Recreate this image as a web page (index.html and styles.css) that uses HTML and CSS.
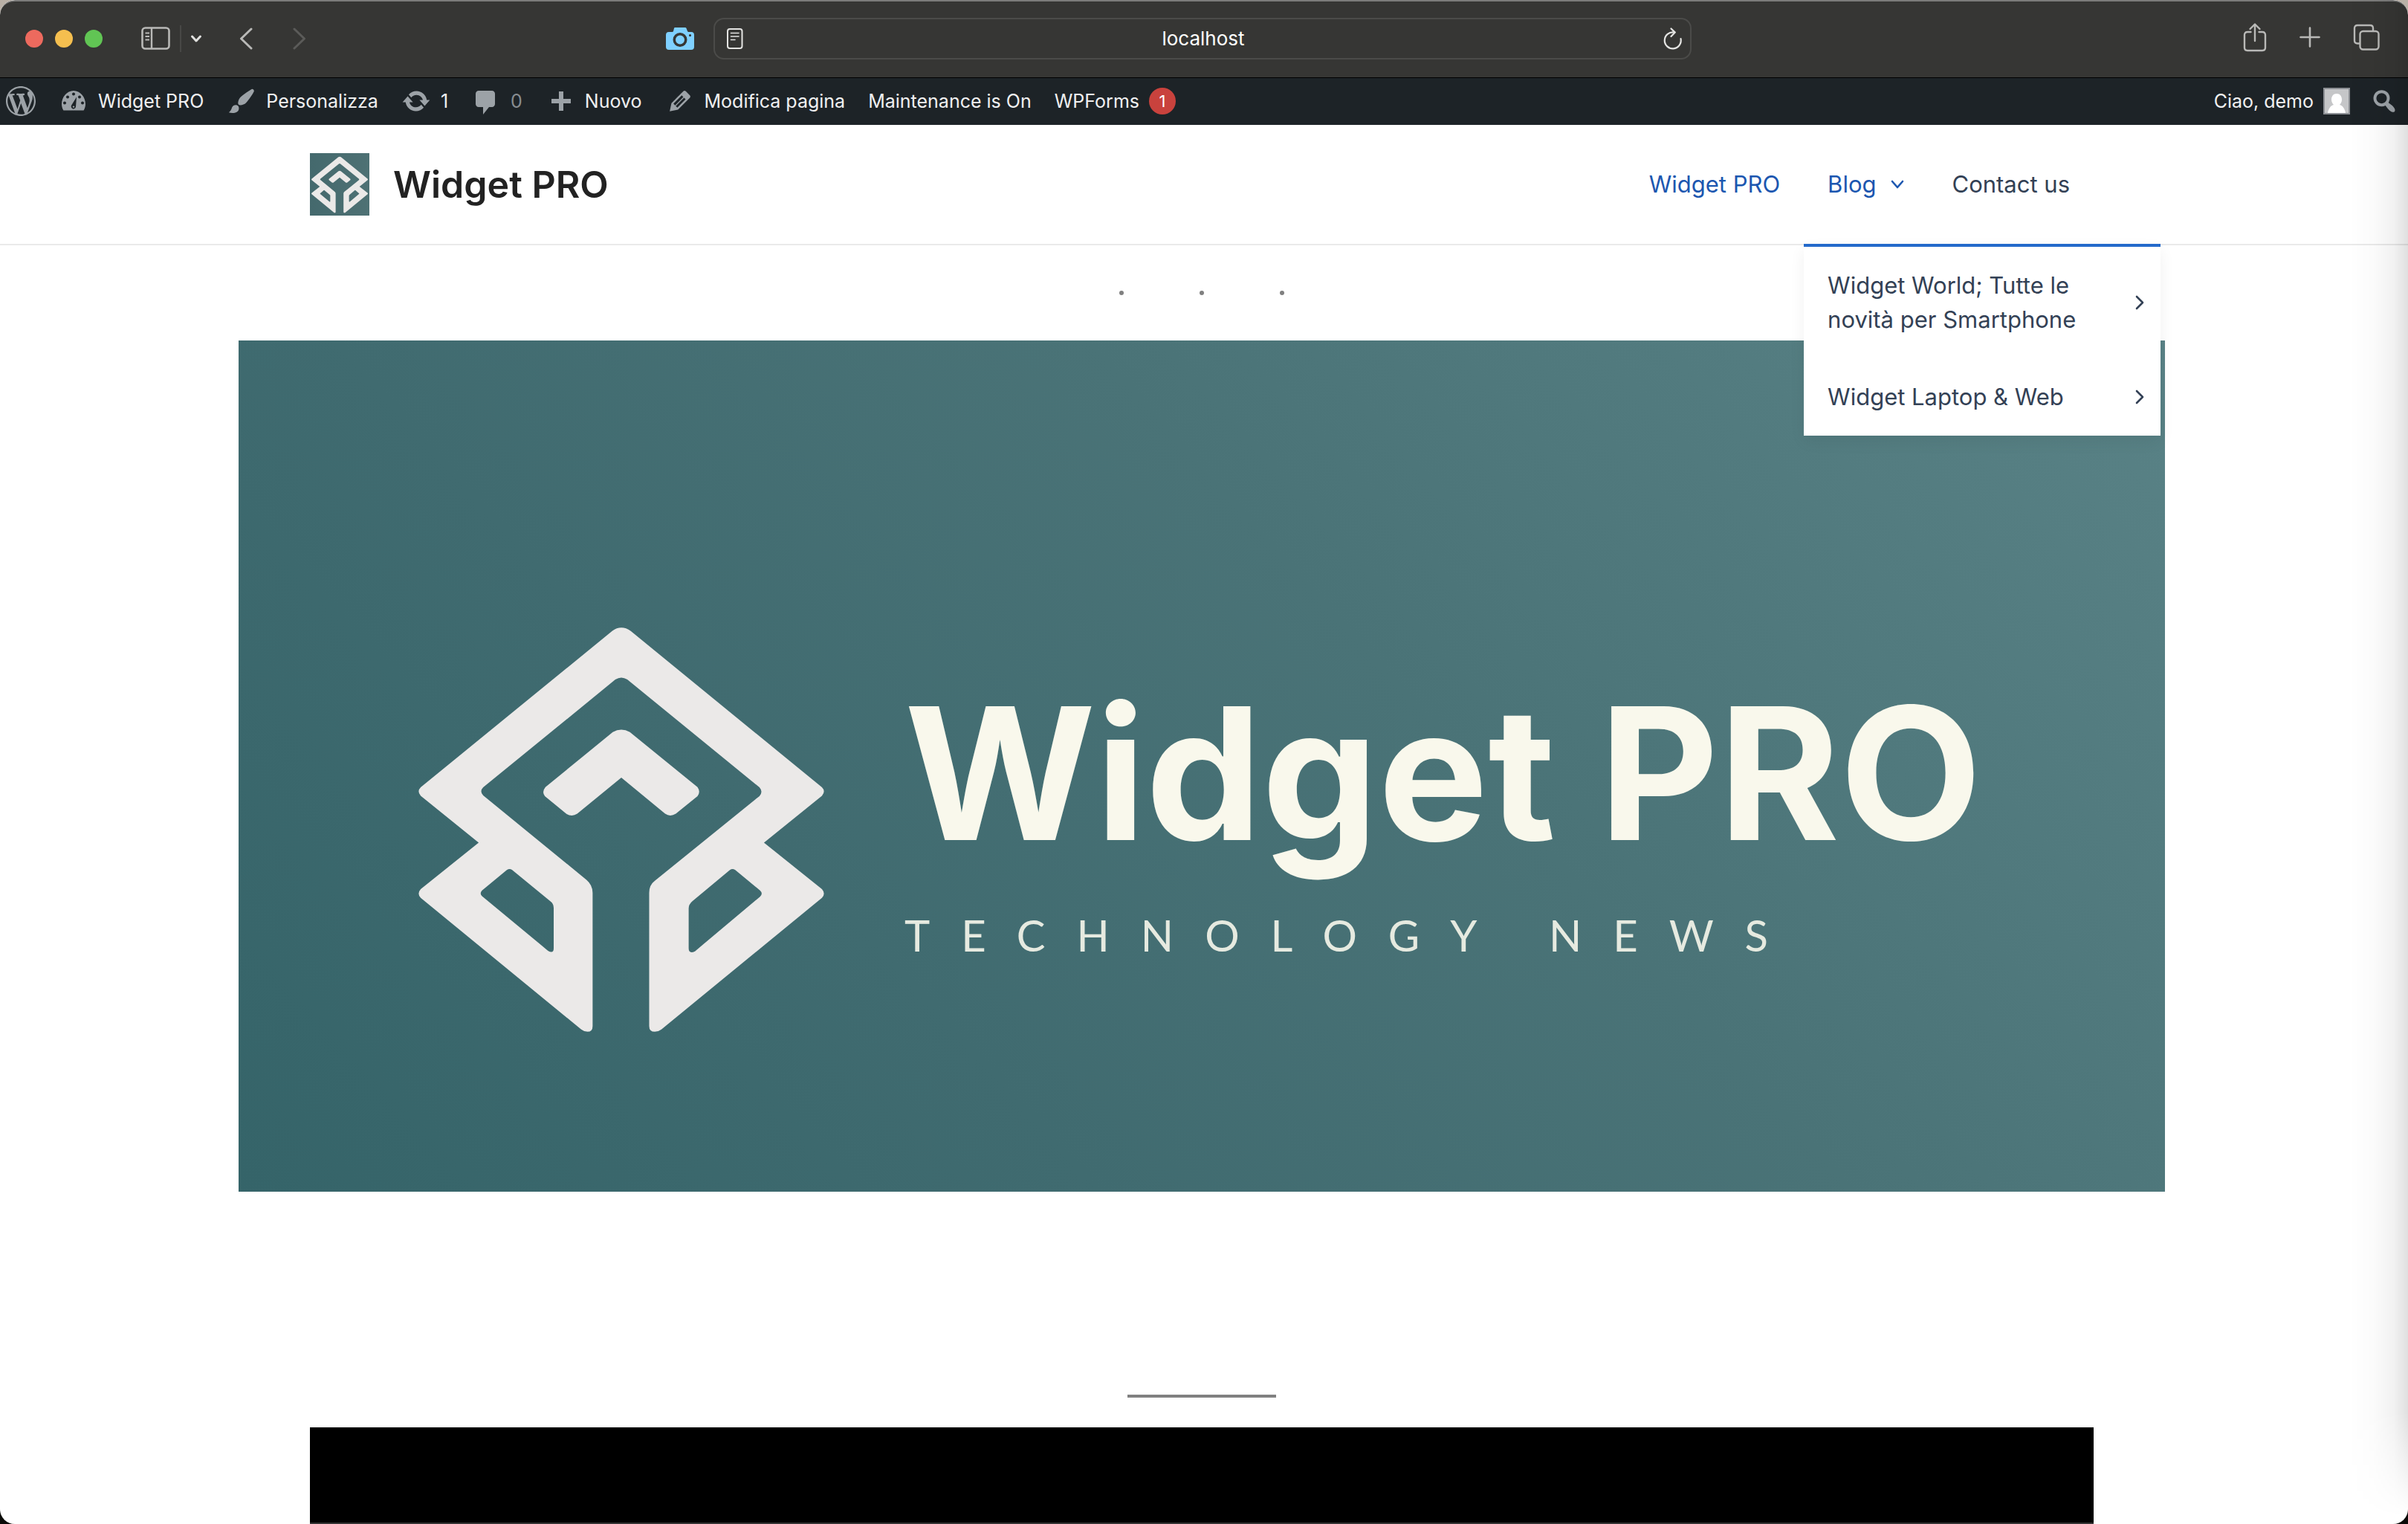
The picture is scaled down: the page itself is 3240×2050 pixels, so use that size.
FILE: index.html
```html
<!DOCTYPE html>
<html lang="it">
<head>
<meta charset="utf-8">
<title>Widget PRO</title>
<meta name="viewport" content="width=device-width, initial-scale=1">
<link rel="stylesheet" href="styles.css">
</head>
<body>
<svg class="defs" width="0" height="0" aria-hidden="true">
  <symbol id="mark" viewBox="60 62 1428 1422">
    <path fill-rule="evenodd" d="M742 74Q774 51 807 74L1480 624Q1494 638 1480 654L1276 819L1480 982Q1494 998 1480 1013L915 1476Q905 1484 892 1484Q872 1484 872 1464V995Q872 968 892 953L1260 655Q1274 640 1260 624L795 245Q774 231 753 245L288 624Q274 638 288 653L652 950Q673 968 673 995V1464Q673 1484 655 1484Q643 1484 633 1476L68 1013Q54 998 68 982L272 819L68 654Q54 638 68 624ZM371 915L284 987Q274 997 284 1007L516 1199Q536 1211 536 1190V1048Q536 1034 524 1025L390 915Q381 908 371 915ZM1156 915L1024 1025Q1011 1036 1011 1050V1190Q1011 1211 1033 1201L1262 1009Q1274 998 1262 987L1175 915Q1165 908 1156 915Z"/>
    <path d="M744 430Q774 413 804 430L1042 623Q1054 640 1042 655L966 717Q946 730 928 717L774 590L619 717Q600 730 580 717L505 655Q493 640 507 623Z"/>
  </symbol>
</svg>

<div class="window">
  <header class="toolbar">
    <div class="start-tools">
      <div class="lights">
        <button class="light close" aria-label="Chiudi"></button>
        <button class="light minimize" aria-label="Riduci"></button>
        <button class="light expand" aria-label="Ingrandisci"></button>
      </div>
      <div class="side-tools">
        <button class="tool" aria-label="Barra laterale"><svg width="40" height="32" viewBox="0 0 40 32" fill="none" stroke="currentColor"><rect x="1.5" y="1.5" width="36" height="28" rx="4" stroke-width="2.6"/><path d="M14 2v28" stroke-width="2.4"/><path d="M5.500 8.500h5.500M5.500 13h5.500M5.500 17.500h5.500" stroke-width="1.800"/></svg></button>
        <span class="divider"></span>
        <button class="tool" aria-label="Gruppi di pannelli"><svg width="16" height="12" viewBox="0 0 16 12" fill="none" stroke="#e0e0de" stroke-width="3" stroke-linecap="round" stroke-linejoin="round"><path d="M2.500 3L8 9l5.500-6"/></svg></button>
      </div>
      <div class="history">
        <button class="tool" aria-label="Indietro"><svg width="18" height="30" viewBox="0 0 18 30" fill="none" stroke="currentColor" stroke-width="3" stroke-linecap="round" stroke-linejoin="round"><path d="M16 2L2.500 15 16 28"/></svg></button>
        <button class="tool" aria-label="Avanti" disabled><svg width="18" height="30" viewBox="0 0 18 30" fill="none" stroke="currentColor" stroke-width="3" stroke-linecap="round" stroke-linejoin="round"><path d="M2 2l13.500 13L2 28"/></svg></button>
      </div>
      <button class="tool camera" aria-label="Istantanea"><svg width="38" height="30" viewBox="0 0 38 30"><path fill="#7fd0ff" fill-rule="evenodd" d="M12 0h14q1 0 1.500 1l1.500 4q.5 1 1.500 1H34q4 0 4 4v16q0 4-4 4H4q-4 0-4-4V10q0-4 4-4h4.500q1 0 1.500-1l1-4q.3-1 1-1zM19 7a9.500 9.500 0 1 0 0 19 9.500 9.500 0 1 0 0-19zM19 10.500a6 6 0 1 1 0 12 6 6 0 1 1 0-12zM32.500 9a1.600 1.600 0 1 0 0 3.200 1.600 1.600 0 1 0 0-3.200z"/></svg></button>
    </div>
    <div class="address">
      <button class="tool bright" aria-label="Lettore"><svg width="22" height="30" viewBox="0 0 22 30" fill="none" stroke="currentColor"><rect x="1" y="2" width="19.500" height="26" rx="3" stroke-width="2"/><path d="M5.500 7.500H16M5.500 12H16M5.500 16.500H11" stroke-width="1.600" stroke-linecap="round"/></svg></button>
      <input class="url" type="text" value="localhost" aria-label="Indirizzo">
      <button class="tool bright" aria-label="Ricarica"><svg width="26" height="30" viewBox="0 0 26 30" fill="none" stroke="currentColor" stroke-width="2.200" stroke-linecap="round" stroke-linejoin="round"><path d="M14.500 6.500A11 11 0 1 0 23.500 15"/><path d="M10.500 1.500L15.800 6.600 10.500 12"/></svg></button>
    </div>
    <div class="end-tools">
      <button class="tool" aria-label="Condividi"><svg width="32" height="40" viewBox="0 0 32 40" fill="none" stroke="currentColor" stroke-width="2.400" stroke-linecap="round" stroke-linejoin="round"><path d="M10.500 13H6q-4 0-4 4v17q0 4 4 4h20q4 0 4-4V17q0-4-4-4h-4.500M16 25V3M9.500 9L16 2.500 22.500 9"/></svg></button>
      <button class="tool" aria-label="Nuovo pannello"><svg width="28" height="28" viewBox="0 0 28 28" fill="none" stroke="currentColor" stroke-width="2.600" stroke-linecap="round"><path d="M14 1.500v25M1.500 14h25"/></svg></button>
      <button class="tool" aria-label="Panoramica pannelli"><svg width="36" height="36" viewBox="0 0 36 36" fill="none" stroke="currentColor" stroke-width="2.400" stroke-linecap="round"><rect x="9.500" y="10" width="25" height="24.500" rx="4"/><path d="M8.500 26.500H6q-4 0-4-4V6q0-4 4-4h17q4 0 4 4v3"/></svg></button>
    </div>
  </header>

  <nav class="adminbar" aria-label="Barra di amministrazione">
    <ul class="admin-list">
      <li><a href="#" aria-label="WordPress"><svg class="dash" viewBox="0 0 20 20"><path d="M20 10c0-5.510-4.490-10-10-10C4.480 0 0 4.490 0 10c0 5.520 4.480 10 10 10 5.510 0 10-4.480 10-10zM7.780 15.370L4.370 6.220c.55-.02 1.170-.08 1.170-.08.5-.06.44-1.130-.06-1.110 0 0-1.450.11-2.370.11-.18 0-.37 0-.58-.01C4.120 2.690 6.870 1.110 10 1.110c2.330 0 4.450.87 6.050 2.340-.68-.11-1.650.39-1.650 1.580 0 .74.45 1.360.9 2.100.35.61.55 1.360.55 2.460 0 1.490-1.400 5-1.400 5l-3.030-8.370c.54-.02.82-.17.82-.17.5-.05.44-1.250-.06-1.220 0 0-1.440.12-2.380.12-.87 0-2.330-.12-2.330-.12-.5-.03-.56 1.200-.06 1.220l.92.08 1.260 3.410zM17.410 10c.24-.64.74-1.870.43-4.250.7 1.290 1.050 2.710 1.050 4.250 0 3.290-1.730 6.240-4.400 7.780.97-2.590 1.940-5.200 2.920-7.780zM6.100 18.090C3.120 16.650 1.110 13.530 1.110 10c0-1.300.23-2.480.72-3.590C3.250 10.300 4.670 14.200 6.100 18.090zm4.030-6.630l2.580 6.980c-.86.29-1.760.45-2.710.45-.79 0-1.570-.11-2.290-.33.81-2.380 1.620-4.740 2.420-7.100z"/></svg></a></li>
      <li><a href="#"><svg class="dash" viewBox="0 0 20 20"><path d="M3.200 16.200h13.600c.8-1.300 1.200-2.700 1.200-4.200 0-4.800-3.580-9-8-9s-8 4.200-8 9c0 1.500.4 2.900 1.200 4.200z"/><g fill="#1d2327"><circle cx="10" cy="5.300" r="1"/><circle cx="6" cy="7.200" r="1"/><circle cx="14" cy="7.200" r="1"/><circle cx="4" cy="11.200" r="1"/><circle cx="16" cy="11.200" r="1"/><path d="M12 7.300l-.5 6.600a1.600 1.600 0 1 1-2.900-1.200z"/></g><circle cx="10" cy="13.800" r=".6"/></svg>Widget PRO</a></li>
      <li><a href="#"><svg class="dash" viewBox="0 0 20 20"><path d="M18.330 3.570s.27-.8-.31-1.360c-.53-.52-1.220-.24-1.220-.24-.61.3-5.760 3.470-7.670 5.570-.86.96-2.060 3.790-1.090 4.820.92.98 3.960-.17 4.790-1 2.060-2.060 5.210-7.170 5.500-7.790zM1.400 17.650c2.370-1.560 1.460-3.410 3.230-4.640.93-.65 2.220-.62 3.080.29.63.67.8 2.570-.16 3.460-1.570 1.450-4 1.550-6.150.89z"/></svg>Personalizza</a></li>
      <li><a href="#"><svg class="dash" viewBox="0 0 20 20"><path d="M10.200 3.280c3.530 0 6.430 2.610 6.920 6h2.080l-3.500 4-3.500-4h2.320c-.45-1.970-2.210-3.450-4.320-3.450-1.450 0-2.730.71-3.540 1.780L4.950 5.660C6.230 4.200 8.110 3.280 10.200 3.280zm-.4 13.440c-3.520 0-6.430-2.610-6.920-6H.8l3.500-4c1.170 1.330 2.330 2.670 3.500 4H5.480c.45 1.970 2.210 3.450 4.320 3.450 1.450 0 2.730-.71 3.540-1.780l1.710 1.950c-1.280 1.460-3.150 2.380-5.250 2.380z"/></svg>1</a></li>
      <li><a href="#" class="muted"><svg class="dash" viewBox="0 0 20 20"><path d="M5 3h9c1.100 0 2 .9 2 2v7c0 1.100-.9 2-2 2h-2l-4 5v-5H5c-1.100 0-2-.9-2-2V5c0-1.100.9-2 2-2z"/></svg>0</a></li>
      <li><a href="#"><svg class="dash" viewBox="0 0 20 20"><path d="M17 8.500v3h-5v5H9v-5H4v-3h5v-5h3v5h5z"/></svg>Nuovo</a></li>
      <li><a href="#"><svg class="dash" viewBox="0 0 20 20"><path d="M13.890 3.390l2.710 2.720c.46.46.42 1.240.03 1.640l-8.010 8.020-5.560 1.160 1.160-5.580s7.600-7.630 7.990-8.030c.39-.39 1.220-.39 1.680.07zm-2.730 2.790l-5.590 5.610 1.110 1.110 5.540-5.650zm-2.970 8.230l5.580-5.600-1.070-1.080-5.590 5.600z"/></svg>Modifica pagina</a></li>
      <li><a href="#">Maintenance is On</a></li>
      <li><a href="#">WPForms<span class="count">1</span></a></li>
    </ul>
    <ul class="admin-list account">
      <li><a href="#">Ciao, demo<svg class="avatar" viewBox="0 0 36 36"><rect width="36" height="36" fill="#8c8f94"/><rect x="2" y="2" width="32" height="32" fill="#c5c6c8"/><path fill="#fff" d="M18 8c4.500 0 7 3.500 7 8 0 3-1.500 5.500-3 7 4 1 7 5 8 11H6c1-6 4-10 8-11-1.500-1.500-3-4-3-7 0-4.500 2.500-8 7-8z"/></svg></a></li>
      <li><a href="#" aria-label="Cerca"><svg class="dash" viewBox="0 0 20 20"><path d="M12.140 4.180c1.870 1.870 2.110 4.750.72 6.890.12.1.22.21.36.31.2.16.47.36.81.59.34.24.56.39.66.47.42.31.73.57.94.78.32.32.6.65.84 1 .25.35.44.69.59 1.040.14.35.21.68.18 1-.02.32-.14.59-.36.81s-.49.34-.81.36c-.31.02-.65-.04-.99-.19-.35-.14-.7-.34-1.040-.59-.35-.24-.68-.52-1-.84-.21-.21-.47-.52-.77-.93-.1-.13-.25-.35-.47-.66-.22-.32-.4-.57-.56-.78-.16-.2-.29-.35-.44-.5-2.070 1.090-4.690.76-6.440-.98-2.140-2.150-2.140-5.640 0-7.780 2.150-2.150 5.630-2.150 7.780 0zm-1.410 6.360c1.360-1.370 1.360-3.580 0-4.950-1.370-1.370-3.590-1.370-4.950 0-1.370 1.370-1.370 3.580 0 4.950 1.360 1.370 3.580 1.370 4.950 0z"/></svg></a></li>
    </ul>
  </nav>

  <div class="page">
    <header class="site-header">
      <div class="container header-row">
        <a class="brand" href="#">
          <span class="brand-logo"><svg width="76" height="77"><use href="#mark"/></svg></span>
          <span class="brand-name">Widget PRO</span>
        </a>
        <nav class="main-nav" aria-label="Menu principale">
          <ul class="menu">
            <li><a class="current" href="#">Widget PRO</a></li>
            <li class="has-sub"><a class="current" href="#">Blog<svg class="caret" width="18" height="12" viewBox="0 0 18 12" fill="none" stroke="currentColor" stroke-width="2.600" stroke-linecap="round" stroke-linejoin="round"><path d="M2 2l7 8 7-8"/></svg></a>
              <ul class="submenu">
                <li><a href="#">Widget World; Tutte le novità per Smartphone<svg width="12" height="20" viewBox="0 0 12 20" fill="none" stroke="currentColor" stroke-width="2.600" stroke-linecap="round" stroke-linejoin="round"><path d="M2 2l8 8-8 8"/></svg></a></li>
                <li><a href="#">Widget Laptop &amp; Web<svg width="12" height="20" viewBox="0 0 12 20" fill="none" stroke="currentColor" stroke-width="2.600" stroke-linecap="round" stroke-linejoin="round"><path d="M2 2l8 8-8 8"/></svg></a></li>
              </ul>
            </li>
            <li><a href="#">Contact us</a></li>
          </ul>
        </nav>
      </div>
    </header>

    <main class="content">
      <div class="dots" role="separator"><span></span><span></span><span></span></div>
      <section class="hero">
        <svg class="hero-mark" width="546" height="544"><use href="#mark"/></svg>
        <div class="hero-text">
          <h1 class="hero-title">Widget PRO</h1>
          <p class="hero-sub">TECHNOLOGY NEWS</p>
        </div>
      </section>
      <hr class="rule">
      <div class="container cover"></div>
    </main>
  </div>
</div>
</body>
</html>
```
FILE: styles.css
```css
* { box-sizing: border-box; }

body {
  margin: 0;
  background: linear-gradient(#b9b0a6 50%, #0b0b08 50%);
  font-family: Inter, "Liberation Sans", sans-serif;
}

ul { list-style: none; margin: 0; padding: 0; }
a { color: inherit; text-decoration: none; }
svg { display: block; flex: none; }
button { border: 0; padding: 0; background: none; color: inherit; font: inherit; }
.defs { position: absolute; }

.window {
  position: relative;
  display: flex;
  flex-direction: column;
  height: 100vh;
  overflow: hidden;
  border-radius: 20px;
  background: #fff;
}

/* light rim along the bottom edge of the window */
.window::before {
  content: "";
  position: absolute;
  right: 0;
  bottom: 0;
  left: 0;
  height: 2px;
  pointer-events: none;
  background: rgba(255,255,255,.2);
}

/* shade cast by the neighbouring window on the right edge */
.window::after {
  content: "";
  position: absolute;
  top: 0;
  right: 0;
  bottom: 0;
  width: 80px;
  pointer-events: none;
  background: linear-gradient(to right, rgba(0,0,0,0), rgba(0,0,0,.015) 40%, rgba(0,0,0,.05) 75%, rgba(0,0,0,.12));
  -webkit-mask-image: linear-gradient(#000 calc(100% - 150px), transparent calc(100% - 10px));
  mask-image: linear-gradient(#000 calc(100% - 150px), transparent calc(100% - 10px));
}

/* Browser toolbar */
.toolbar {
  flex: none;
  display: grid;
  grid-template-columns: 1fr minmax(0, 1316px) 1fr;
  align-items: center;
  height: 105px;
  padding: 0 38px 2px 34px;
  border-top: 2px solid #7b7b7a;
  border-bottom: 1px solid #000;
  background: #363634;
  color: #b9b9b7;
  border-radius: 20px 20px 0 0;
}
.start-tools { display: flex; align-items: center; }
.lights { display: flex; gap: 16px; }
.light { width: 24px; height: 24px; border-radius: 50%; }
.close { background: #ed6a5e; }
.minimize { background: #f5bf4f; }
.expand { background: #61c554; }
.side-tools { display: flex; align-items: center; gap: 12px; margin-left: 52px; }
.divider { width: 2px; height: 36px; background: #484846; }
.history { display: flex; gap: 54px; margin-left: 50px; }
.tool { flex: none; display: block; }
.tool:disabled { color: #5b5b59; }
.bright { color: #e4e4e2; }
.camera { margin: 0 26px 0 auto; }
.address {
  display: flex;
  align-items: center;
  justify-content: space-between;
  height: 56px;
  padding: 0 10px 0 16px;
  border: 2px solid #4b4b49;
  border-radius: 14px;
}
.url {
  flex: 1;
  min-width: 0;
  padding: 0;
  border: 0;
  background: none;
  color: #fff;
  font: 26px/32px Inter, sans-serif;
  text-align: center;
}
.end-tools {
  display: flex;
  align-items: center;
  justify-content: flex-end;
  gap: 44px;
  padding-bottom: 4px;
}

/* Admin bar */
.adminbar {
  flex: none;
  display: flex;
  justify-content: space-between;
  height: 63px;
  padding: 0 12px 0 8px;
  background: #1d2327;
  color: #f0f0f1;
  font-size: 25px;
  line-height: 62px;
}
.admin-list { display: flex; gap: 31px; }
.account { gap: 26px; }
.admin-list a { display: flex; align-items: center; gap: 13px; height: 62px; }
.dash { width: 40px; height: 40px; fill: #9ca2a7; }
.muted { color: #888d91; }
.count {
  width: 36px;
  height: 36px;
  border-radius: 50%;
  background: #c9423d;
  color: #fff;
  font-size: 22px;
  line-height: 36px;
  text-align: center;
}
.avatar { width: 36px; height: 36px; }

/* Site header */
.page { flex: 1; min-height: 0; }
.container { width: calc(100% - 64px); max-width: 2400px; margin: 0 auto; }
.site-header { padding-right: 6px; border-bottom: 2px solid #eaeaea; }
.header-row { display: flex; align-items: center; justify-content: space-between; height: 160px; }
.brand { display: flex; align-items: center; gap: 32px; color: #222; }
.brand-logo {
  display: grid;
  place-items: center;
  width: 80px;
  height: 84px;
  background: linear-gradient(to right, #44696d, #4e7174);
  fill: #ebe9e8;
}
.brand-name { font-size: 50px; font-weight: 600; line-height: 64px; }
.menu { display: flex; color: #334155; font-size: 31px; line-height: 46px; }
.menu > li > a { display: flex; align-items: center; padding: 57px 32px; }
.menu .current { color: #1c57b0; }
.caret { margin-left: 20px; }
.has-sub { position: relative; }
.submenu {
  position: absolute;
  top: 160px;
  left: 0;
  z-index: 2;
  width: 480px;
  border-top: 4px solid #246acb;
  background: #fff;
  box-shadow: 0 8px 20px rgba(0,0,0,.06);
}
.submenu a {
  display: flex;
  align-items: center;
  justify-content: space-between;
  gap: 24px;
  padding: 29px 22px 29px 32px;
}

/* Content */
.content { padding-right: 6px; }
.dots { display: flex; justify-content: center; gap: 102px; padding: 61px 0; }
.dots span { width: 6px; height: 6px; border-radius: 50%; background: #808080; }
.hero {
  display: flex;
  align-items: flex-start;
  gap: 108px;
  max-width: 2592px;
  height: 1145px;
  margin: 0 auto;
  padding: 386px 0 0 242px;
  background: linear-gradient(48deg, #356469, #406b70 32%, #4a7377 60%, #598286);
}
.hero-mark { fill: #ebe9e8; }
.hero-title {
  margin: 50px 0 0;
  color: #f9f8ec;
  font: 700 248px/292px Inter, sans-serif;
  white-space: nowrap;
}
.hero-sub {
  margin: 37px 0 0;
  color: #e6eae0;
  font: 400 58px/70px Lato, sans-serif;
  letter-spacing: 42px;
  white-space: nowrap;
}
.rule { width: 200px; height: 4px; margin: 273px auto 40px; border: 0; background: #808080; }
.cover { height: 1200px; background: #000; }
```
